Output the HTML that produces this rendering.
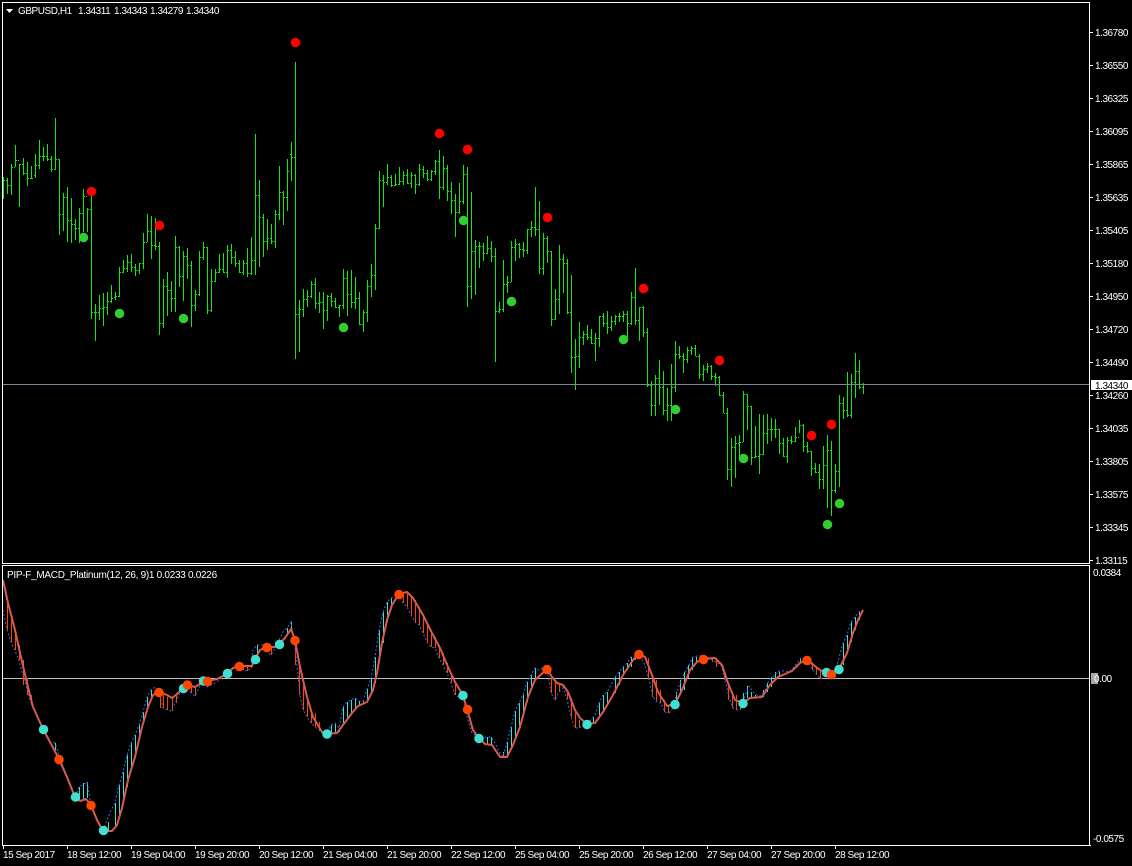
<!DOCTYPE html>
<html><head><meta charset="utf-8"><title>GBPUSD,H1</title>
<style>
html,body{margin:0;padding:0;background:#000;width:1132px;height:866px;overflow:hidden}
svg{display:block}
text{font-family:"Liberation Sans",sans-serif;font-size:10px;fill:#fff;letter-spacing:-.45px}
.crisp{fill:none;stroke-width:1;shape-rendering:crispEdges}
.dot{fill:none;stroke-width:9.5;stroke-linecap:round}
</style></head>
<body>
<svg xmlns="http://www.w3.org/2000/svg" width="1132" height="866" viewBox="0 0 1132 866">
<rect width="1132" height="866" fill="#000"/>
<path class="crisp" stroke="#14e814" d="M3.5 177V199M7.5 178V194M11.5 164V195M15.5 145V167M19.5 164V207M23.5 158V175M27.5 162V186M31.5 166V179M35.5 154V178M39.5 140V169M43.5 147V161M47.5 144V161M51.5 156V172M55.5 118V170M59.5 159V235M63.5 193V231M67.5 187V242M71.5 198V243M75.5 219V240M79.5 208V243M83.5 189V232M87.5 208V232M91.5 196V319M95.5 304V341M99.5 295V320M103.5 293V326M107.5 292V315M111.5 285V303M115.5 292V300M119.5 267V297M123.5 260V273M127.5 255V272M131.5 254V272M135.5 264V276M139.5 263V274M143.5 233V269M147.5 214V242M151.5 216V259M155.5 218V250M159.5 242V335M163.5 279V328M167.5 272V316M171.5 281V312M175.5 236V312M179.5 246V287M183.5 251V301M187.5 248V279M191.5 261V327M195.5 290V311M199.5 251V296M203.5 242V260M207.5 247V314M211.5 269V312M215.5 269V282M219.5 254V273M223.5 253V273M227.5 245V278M231.5 244V264M235.5 251V267M239.5 260V273M243.5 260V275M247.5 248V277M251.5 237V275M255.5 134V275M259.5 180V267M263.5 214V257M267.5 219V250M271.5 224V244M275.5 210V248M279.5 166V220M283.5 191V225M287.5 159V211M291.5 142V181M295.5 62V359M299.5 300V352M303.5 289V317M307.5 290V307M311.5 281V298M315.5 278V309M319.5 292V313M323.5 292V329M327.5 295V321M331.5 293V307M335.5 298V308M339.5 305V317M343.5 269V309M347.5 271V316M351.5 270V308M355.5 277V309M359.5 292V325M363.5 310V332M367.5 280V322M371.5 264V297M375.5 224V290M379.5 171V229M383.5 175V207M387.5 164V185M391.5 175V187M395.5 174V186M399.5 167V185M403.5 171V185M407.5 169V184M411.5 172V188M415.5 174V194M419.5 164V186M423.5 166V178M427.5 170V181M431.5 170V181M435.5 160V175M439.5 150V199M443.5 156V190M447.5 165V201M451.5 182V214M455.5 194V237M459.5 183V214M463.5 165V204M467.5 167V307M471.5 192V299M475.5 240V295M479.5 242V268M483.5 243V261M487.5 236V254M491.5 241V262M495.5 248V362M499.5 302V313M503.5 260V312M507.5 276V293M511.5 241V282M515.5 239V261M519.5 243V258M523.5 242V257M527.5 229V254M531.5 221V237M535.5 187V236M539.5 201V274M543.5 233V275M547.5 236V263M551.5 251V326M555.5 289V320M559.5 245V314M563.5 254V293M567.5 259V314M571.5 275V373M575.5 339V390M579.5 322V368M583.5 331V345M587.5 325V340M591.5 329V344M595.5 333V361M599.5 316V347M603.5 313V327M607.5 311V334M611.5 316V331M615.5 315V325M619.5 313V322M623.5 311V322M627.5 311V337M631.5 292V325M635.5 268V325M639.5 307V341M643.5 306V337M647.5 328V387M651.5 381V416M655.5 375V416M659.5 360V405M663.5 371V415M667.5 388V421M671.5 364V421M675.5 341V392M679.5 346V359M683.5 353V373M687.5 347V363M691.5 346V355M695.5 345V356M699.5 354V379M703.5 365V381M707.5 363V373M711.5 365V380M715.5 373V386M719.5 376V396M723.5 392V413M727.5 408V480M731.5 438V487M735.5 436V478M739.5 435V459M743.5 391V442M747.5 394V430M751.5 406V465M755.5 426V458M759.5 414V474M763.5 415V455M767.5 414V444M771.5 418V441M775.5 419V438M779.5 429V454M783.5 438V457M787.5 437V463M791.5 436V444M795.5 427V442M799.5 420V433M803.5 424V452M807.5 442V453M811.5 451V476M815.5 463V473M819.5 464V489M823.5 446V489M827.5 435V508M831.5 441V516M835.5 464V493M839.5 395V487M843.5 397V419M847.5 372V417M851.5 374V418M855.5 353V398M859.5 360V389M863.5 383V394"/>
<path class="crisp" stroke="#14e814" stroke-dasharray="1 1" d="M2 180.5h1M4 180.5h3M8 185.5h3M12 167.5h3M16 160.5h3M20 164.5h3M24 173.5h3M28 178.5h3M32 178.5h1M34 175.5h1M36 165.5h3M40 156.5h3M44 156.5h3M48 159.5h3M52 169.5h3M56 159.5h3M60 214.5h3M64 197.5h3M68 220.5h3M72 224.5h3M76 228.5h3M80 213.5h3M84 196.5h3M88 209.5h3M92 312.5h3M96 312.5h3M100 308.5h3M104 307.5h3M108 301.5h3M112 298.5h1M114 297.5h1M116 296.5h3M120 272.5h3M124 268.5h3M128 262.5h3M132 267.5h3M136 270.5h3M140 263.5h3M144 242.5h3M148 231.5h3M152 245.5h3M156 246.5h3M160 323.5h3M164 286.5h3M168 290.5h3M172 298.5h3M176 247.5h3M180 276.5h3M184 256.5h3M188 265.5h3M192 305.5h3M196 294.5h3M200 257.5h3M204 247.5h3M208 310.5h3M212 281.5h3M216 272.5h3M220 269.5h3M224 272.5h3M228 250.5h3M232 257.5h3M236 263.5h3M240 272.5h3M244 263.5h3M248 273.5h3M252 260.5h3M256 195.5h3M260 217.5h3M264 241.5h3M268 238.5h3M272 241.5h3M276 214.5h3M280 192.5h3M284 197.5h3M288 171.5h1M290 154.5h1M292 157.5h3M296 314.5h3M300 309.5h3M304 299.5h3M308 296.5h3M312 284.5h3M316 303.5h3M320 302.5h3M324 310.5h3M328 296.5h3M332 301.5h3M336 307.5h3M340 305.5h3M344 278.5h3M348 294.5h3M352 302.5h3M356 298.5h3M360 324.5h3M364 312.5h3M368 286.5h3M372 275.5h3M376 228.5h3M380 180.5h3M384 182.5h3M388 177.5h3M392 185.5h3M396 184.5h3M400 181.5h3M404 175.5h3M408 183.5h3M412 175.5h3M416 184.5h3M420 169.5h3M424 173.5h3M428 179.5h3M432 171.5h3M436 161.5h3M440 187.5h3M444 168.5h3M448 191.5h3M452 200.5h3M456 212.5h3M460 201.5h3M464 174.5h3M468 286.5h3M472 251.5h3M476 246.5h3M480 246.5h3M484 253.5h3M488 248.5h3M492 256.5h3M496 311.5h3M500 309.5h3M504 284.5h3M508 282.5h3M512 247.5h3M516 244.5h3M520 249.5h3M524 250.5h3M528 229.5h3M532 227.5h3M536 229.5h3M540 268.5h3M544 238.5h3M548 251.5h3M552 319.5h3M556 299.5h3M560 259.5h3M564 263.5h3M568 312.5h3M572 357.5h3M576 356.5h3M580 337.5h3M584 334.5h3M588 337.5h3M592 343.5h3M596 338.5h3M600 316.5h3M604 323.5h3M608 327.5h3M612 321.5h3M616 316.5h3M620 316.5h3M624 314.5h3M628 323.5h3M632 297.5h3M636 320.5h3M640 307.5h3M644 332.5h3M648 385.5h3M652 405.5h3M656 378.5h3M660 387.5h3M664 410.5h3M668 405.5h3M672 387.5h3M676 354.5h3M680 356.5h3M684 359.5h3M688 350.5h3M692 348.5h3M696 356.5h3M700 374.5h3M704 369.5h3M708 366.5h3M712 376.5h3M716 377.5h3M720 395.5h3M724 413.5h3M728 469.5h3M732 447.5h3M736 443.5h3M740 442.5h3M744 394.5h3M748 406.5h3M752 457.5h3M756 456.5h3M760 454.5h3M764 433.5h3M768 429.5h3M772 429.5h3M776 429.5h3M780 443.5h3M784 456.5h3M788 440.5h3M792 441.5h3M796 437.5h3M800 425.5h3M804 446.5h3M808 451.5h3M812 468.5h3M816 472.5h3M820 479.5h3M824 465.5h3M828 450.5h3M832 490.5h3M836 471.5h3M840 403.5h3M844 410.5h3M848 415.5h3M852 382.5h3M856 371.5h3M860 387.5h3M864 384.5h1"/>
<rect x="3" y="384" width="1087" height="1" fill="#778899"/>
<path class="dot" stroke="#ff0000" d="M91.5 191.5h0M159.5 225.5h0M295.5 42.5h0M439.5 133.5h0M467.5 149.5h0M547.5 217.5h0M643.5 288.5h0M719.5 360.5h0M811.5 435.5h0M831.5 424.5h0"/>
<path class="dot" stroke="#32cd32" d="M83.5 237.5h0M119.5 313.5h0M183.5 318.5h0M343.5 327.5h0M463.5 220.5h0M511.5 301.5h0M623.5 339.5h0M675.5 409.5h0M743.5 458.5h0M827.5 524.5h0M839.5 503.5h0"/>
<rect x="3" y="678" width="1087" height="1" fill="#c0c0c0"/>
<path class="crisp" stroke="#ff4500" d="M7.5 603V630M11.5 615V642M15.5 630V650M19.5 645V660M23.5 660V685M27.5 678V695M31.5 695V705M160.5 693V708M163.5 695V708M167.5 697V710M172.5 698V711M176.5 693V703M191.5 687V693M195.5 688V696M207.5 681V687M243.5 666V670M247.5 666V671M251.5 666V668M267.5 647V652M271.5 647V655M295.5 645V665M299.5 667V695M303.5 680V710M307.5 697V717M311.5 710V723M315.5 713V727M319.5 722V730M403.5 593V603M407.5 593V607M411.5 597V615M415.5 600V622M419.5 607V625M423.5 615V633M427.5 623V642M431.5 632V647M435.5 637V648M439.5 645V658M443.5 653V665M447.5 663V673M451.5 673V683M455.5 682V695M551.5 677V693M555.5 682V700M559.5 683V692M563.5 685V688M567.5 690V699M571.5 698V717M575.5 710V728M579.5 720V728M648.5 658V678M652.5 678V697M656.5 680V702M660.5 690V703M664.5 700V712M668.5 705V713M712.5 658V662M716.5 660V667M724.5 670V680M728.5 683V700M732.5 693V708M736.5 695V710M740.5 702V710M812.5 662V670M816.5 667V675M820.5 670V679"/>
<path class="crisp" stroke="#40e0d0" d="M55.5 743V750M79.5 787V800M83.5 783V800M87.5 782V798M108.5 822V832M115.5 803V827M119.5 785V817M123.5 772V803M127.5 755V787M131.5 743V770M135.5 735V757M139.5 725V740M143.5 712V720M147.5 697V707M151.5 690V697M257.5 645V657M287.5 628V635M291.5 622V629M331.5 725V733M335.5 723V733M339.5 728V732M343.5 707V725M347.5 702V720M351.5 700V713M355.5 698V708M359.5 701V705M363.5 701V703M367.5 689V701M371.5 678V693M375.5 657V683M379.5 630V663M383.5 612V643M387.5 602V622M391.5 598V607M487.5 737V745M491.5 737V745M503.5 752V757M507.5 742V756M511.5 727V748M515.5 711V740M519.5 703V730M523.5 695V717M527.5 682V702M531.5 675V690M535.5 668V680M593.5 717V723M599.5 703V717M603.5 695V712M607.5 692V703M615.5 677V693M619.5 672V685M623.5 667V675M627.5 663V670M631.5 657V667M635.5 656V660M676.5 692V703M680.5 680V695M684.5 672V690M688.5 665V678M692.5 657V670M696.5 657V663M700.5 657V661M743.5 693V703M747.5 686V698M751.5 692V698M755.5 695V698M763.5 690V697M767.5 683V692M771.5 677V687M775.5 672V680M779.5 672V677M800.5 658V663M843.5 643V665M847.5 635V653M851.5 622V642M855.5 617V630M859.5 612V620"/>
<polyline fill="none" stroke="#4169e1" stroke-width="1" stroke-dasharray="2 2" points="3,610 7,630 12,645 17,655 23,675 30,700 35,712 43,729 50,742 55,743 59,755 67,777 75,797 79,787 87,782 91,805 97,820 103,831 107,820 111,810 115,803 119,785 123,772 127,755 131,743 135,735 139,725 143,712 147,697 151,690 155,687 159,692 163,708 171,711 175,703 179,695 183,688 187,685 191,693 195,696 199,688 203,680 207,687 215,683 219,680 227,675 235,665 243,670 247,671 251,668 253,650 257,645 263,645 267,652 271,655 275,648 279,640 283,632 287,628 291,622 295,648 297,665 300,695 303,710 307,717 311,723 315,727 319,730 322,733 327,734 331,725 335,723 339,728 343,707 347,702 351,700 355,698 359,701 363,701 367,689 371,678 375,657 379,630 383,612 387,602 391,598 395,597 399,595 403,603 407,607 411,615 415,622 419,625 423,633 427,642 431,647 435,648 439,658 443,665 447,673 451,683 455,695 459,697 463,695 467,717 472,733 479,738 487,737 491,737 495,743 499,752 503,757 507,742 511,727 515,711 519,703 523,695 527,682 531,675 535,668 539,670 543,668 547,669 551,693 555,700 559,692 563,688 567,699 571,717 575,728 579,728 583,725 587,722 591,720 595,715 599,703 603,695 607,692 611,685 615,677 619,672 623,667 627,663 631,657 635,656 639,654 645,665 649,680 653,697 657,702 661,703 665,712 669,713 673,708 677,692 681,680 685,672 689,665 693,657 697,656 701,656 705,656 713,660 717,663 721,665 725,680 729,697 733,708 737,710 741,708 745,695 749,686 753,692 757,695 761,696 765,690 769,680 773,677 777,672 781,671 785,671 789,672 793,668 797,663 801,658 805,658 809,664 813,670 817,675 821,679 825,676 829,674 833,673 837,665 841,650 843,643 847,635 851,622 855,617 859,612 863,610"/>
<polyline fill="none" stroke="#d95a50" stroke-width="2" stroke-linejoin="round" points="3,580 8,603 15,630 20,653 27,683 33,707 43,729 50,742 59,759 67,777 75,797 80,801 86,799 91,805 97,820 103,831 112,831 117,825 122,808 128,780 135,757 142,727 148,707 153,695 159,692 167,695 172,698 177,694 183,688 187,685 195,687 200,684 207,681 217,679 227,674 233,668 239,666 252,666 255,659 260,650 267,647 275,647 279,644 285,638 291,629 295,640 300,667 307,697 313,717 322,732 327,734 337,733 343,725 352,713 358,706 367,702 373,690 377,673 382,643 387,620 392,605 399,594 407,592 413,598 423,615 432,633 440,648 448,667 455,682 463,695 467,709 473,730 479,738 485,744 492,745 500,757 507,757 513,745 520,727 528,697 535,680 547,669 552,677 557,683 563,685 568,692 575,710 580,718 587,724 595,723 603,712 613,695 623,675 633,660 639,654 645,657 652,675 658,692 667,706 675,704 682,690 690,670 697,662 703,659 715,658 722,665 728,683 735,700 743,703 750,698 762,697 770,685 778,677 792,671 800,663 807,660 820,670 827,673 831,674 839,669 847,653 853,633 858,620 863,610"/>
<path class="dot" stroke="#40e0d0" d="M43.5 729.5h0M75.5 797h0M103.5 830.5h0M183.5 688.5h0M203.5 681h0M227.5 673.5h0M255.5 659.5h0M279.5 644.5h0M327 734h0M463 695.5h0M479 738.5h0M587 724.5h0M675 704.5h0M743 703.5h0M826.5 672.5h0"/>
<path class="dot" stroke="#ff4500" d="M59 759.5h0M91 805.5h0M159 692.5h0M187.5 685h0M207.5 681.5h0M239.5 666.5h0M267 647.5h0M295 640.5h0M399 594.5h0M467.5 709.5h0M547 669.5h0M639 654.5h0M703.5 659.5h0M807 660.5h0M831.5 674.5h0"/>
<path class="dot" stroke="#40e0d0" d="M839 669.5h0"/>
<g class="crisp" stroke="#fff">
<rect x="2.5" y="2.5" width="1087" height="561"/>
<rect x="2.5" y="565.5" width="1087" height="280"/>
<path d="M1090 32.5h3M1090 65.5h3M1090 98.5h3M1090 131.5h3M1090 164.5h3M1090 197.5h3M1090 230.5h3M1090 263.5h3M1090 296.5h3M1090 329.5h3M1090 362.5h3M1090 395.5h3M1090 428.5h3M1090 461.5h3M1090 494.5h3M1090 527.5h3M1090 560.5h3M1090 845.5h1M3.5 846v3M67.5 846v3M131.5 846v3M195.5 846v3M259.5 846v3M323.5 846v3M387.5 846v3M451.5 846v3M515.5 846v3M579.5 846v3M643.5 846v3M707.5 846v3M771.5 846v3M835.5 846v3"/>
</g>
<path d="M6 9h7l-3.5 4z" fill="#fff"/>
<text y="14"><tspan x="18">GBPUSD,H1</tspan><tspan x="78">1.34311</tspan><tspan x="114">1.34343</tspan><tspan x="150">1.34279</tspan><tspan x="186">1.34340</tspan></text>
<text x="7" y="578" style="letter-spacing:-.29px">PIP-F_MACD_Platinum(12, 26, 9)1 0.0233 0.0226</text>
<text x="1095"><tspan x="1095" y="36">1.36780</tspan><tspan x="1095" y="69">1.36550</tspan><tspan x="1095" y="102">1.36325</tspan><tspan x="1095" y="135">1.36095</tspan><tspan x="1095" y="168">1.35865</tspan><tspan x="1095" y="201">1.35635</tspan><tspan x="1095" y="234">1.35405</tspan><tspan x="1095" y="267">1.35180</tspan><tspan x="1095" y="300">1.34950</tspan><tspan x="1095" y="333">1.34720</tspan><tspan x="1095" y="366">1.34490</tspan><tspan x="1095" y="399">1.34260</tspan><tspan x="1095" y="432">1.34035</tspan><tspan x="1095" y="465">1.33805</tspan><tspan x="1095" y="498">1.33575</tspan><tspan x="1095" y="531">1.33345</tspan><tspan x="1095" y="564">1.33115</tspan></text>
<rect x="1091" y="380" width="41" height="10" fill="#fff"/>
<text x="1095" y="389" style="fill:#000">1.34340</text>
<text x="1093" y="576">0.0384</text>
<rect x="1091" y="673" width="7" height="11" fill="#a8a8a8"/>
<text x="1094" y="682">0.00</text>
<text x="1093" y="842">-0.0575</text>
<text y="858"><tspan x="3">15 Sep 2017</tspan><tspan x="67">18 Sep 12:00</tspan><tspan x="131">19 Sep 04:00</tspan><tspan x="195">19 Sep 20:00</tspan><tspan x="259">20 Sep 12:00</tspan><tspan x="323">21 Sep 04:00</tspan><tspan x="387">21 Sep 20:00</tspan><tspan x="451">22 Sep 12:00</tspan><tspan x="515">25 Sep 04:00</tspan><tspan x="579">25 Sep 20:00</tspan><tspan x="643">26 Sep 12:00</tspan><tspan x="707">27 Sep 04:00</tspan><tspan x="771">27 Sep 20:00</tspan><tspan x="835">28 Sep 12:00</tspan></text>
</svg>
</body></html>
